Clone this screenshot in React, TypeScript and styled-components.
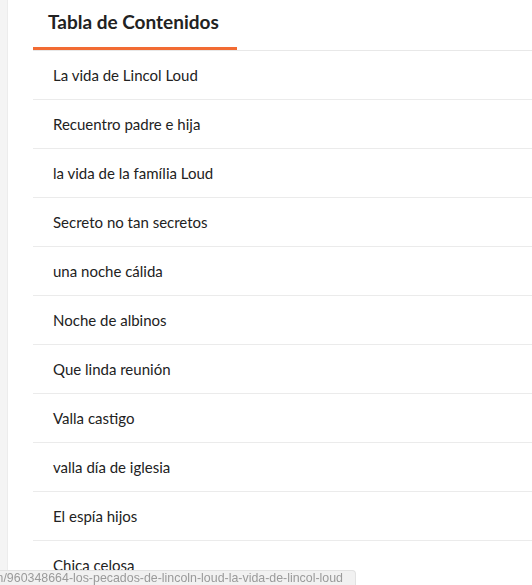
import React from "react";
import styled, { createGlobalStyle } from "styled-components";

const Global = createGlobalStyle`
  html, body { margin: 0; padding: 0; background: #fff; }
  body { font-family: "Lato", "Open Sans", sans-serif; overflow: hidden; }
`;

const Page = styled.div`
  display: flex;
  min-height: 585px;
  width: 532px;
`;

const Edge = styled.div`
  width: 7px;
  flex: none;
  background: #f4f4f4;
  border-right: 1px solid #ececec;
`;

const Main = styled.div`
  flex: 1;
  padding-left: 25px;
  display: flex;
  flex-direction: column;
`;

const Tabs = styled.div`
  display: flex;
  height: 50px;
  border-bottom: 1px solid #e8e8e8;
`;

const Tab = styled.div`
  display: flex;
  align-items: center;
  padding: 0 15px 5px;
  width: 204px;
  box-sizing: border-box;
  height: 50px;
  border-bottom: 3px solid #f26b33;
  margin-bottom: -1px;
  font-size: 19px;
  font-weight: 700;
  color: #222;
`;

const List = styled.ul`
  list-style: none;
  margin: 0;
  padding: 0;
`;

const Item = styled.li`
  height: 48px;
  display: flex;
  align-items: center;
  padding-left: 20px;
  border-bottom: 1px solid #ebebeb;
  font-size: 15px;
  color: #222;
`;

const Status = styled.div`
  position: fixed;
  left: 0;
  bottom: 0;
  width: 356px;
  box-sizing: border-box;
  height: 15px;
  background: #f1f1f1;
  border: 1px solid #e2e2e2;
  border-left: none;
  border-bottom: none;
  border-top-right-radius: 4px;
  overflow: hidden;
  white-space: nowrap;
  font-family: "Liberation Sans", Arial, sans-serif;
  font-size: 12.4px;
  line-height: 14px;
  color: #9a9a9a;
  direction: rtl;
  text-align: left;
  padding-right: 12px;
`;

const chapters = [
  "La vida de Lincol Loud",
  "Recuentro padre e hija",
  "la vida de la família Loud",
  "Secreto no tan secretos",
  "una noche cálida",
  "Noche de albinos",
  "Que linda reunión",
  "Valla castigo",
  "valla día de iglesia",
  "El espía hijos",
  "Chica celosa",
];

export default function App() {
  return (
    <>
      <Global />
      <Page>
        <Edge />
        <Main>
          <Tabs>
            <Tab>Tabla de Contenidos</Tab>
          </Tabs>
          <List>
            {chapters.map((c) => (
              <Item key={c}>{c}</Item>
            ))}
          </List>
        </Main>
      </Page>
      <Status>
        <bdi>https://www.wattpad.com/960348664-los-pecados-de-lincoln-loud-la-vida-de-lincol-loud</bdi>
      </Status>
    </>
  );
}
